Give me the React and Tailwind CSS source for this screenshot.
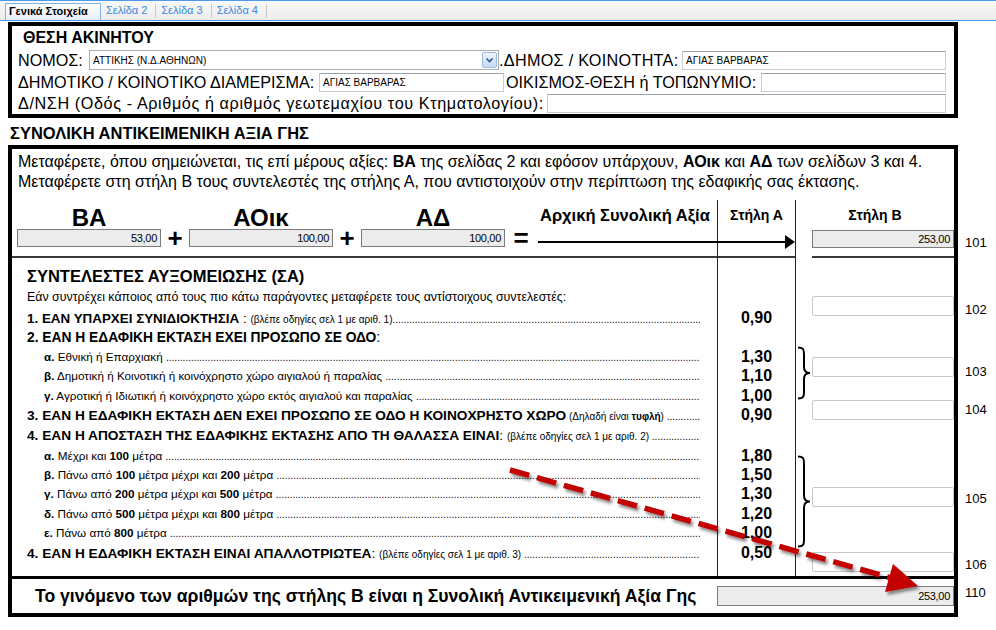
import React from "react";

const dots = ".".repeat(400);

function Dots({ className = "" }) {
  return (
    <span className={"flex-1 min-w-0 overflow-hidden whitespace-nowrap text-[10px] " + className}>
      {dots}
    </span>
  );
}

function GrayBox({ value, className = "" }) {
  return (
    <div
      className={
        "h-[18px] border border-[#7c7c7c] bg-[#ececec] text-right pr-[3px] text-[11px] leading-[16px] tracking-[-0.3px] " +
        className
      }
    >
      {value}
    </div>
  );
}

function WhiteBox({ className = "" }) {
  return <div className={"w-[142px] h-[20px] border border-[#c8c8c8] rounded-[2px] bg-white " + className} />;
}

function TextBox({ value, className = "" }) {
  return (
    <div
      className={
        "h-[19px] border border-[#c9ccd3] border-t-[#9da1a8] bg-white pl-[3px] text-[10px] leading-[17px] tracking-normal whitespace-nowrap " +
        className
      }
    >
      {value}
    </div>
  );
}

function Brace({ h }) {
  const m = h / 2;
  return (
    <svg width="14" height={h} className="ml-px shrink-0">
      <path
        d={`M1,1.5 C6,1.5 7,3 7,8 L7,${m - 6} C7,${m - 1.5} 9,${m} 13,${m} C9,${m} 7,${m + 1.5} 7,${m + 6} L7,${h - 8} C7,${h - 3} 6,${h - 1.5} 1,${h - 1.5}`}
        fill="none"
        stroke="#000"
        strokeWidth="2"
      />
    </svg>
  );
}

function TabBar() {
  const tabs = ["Σελίδα 2", "Σελίδα 3", "Σελίδα 4"];
  return (
    <div className="h-[21px] border-t border-b border-[#4d9be6] bg-gradient-to-b from-[#fafafa] to-[#ebebeb] flex items-end pl-[5px] text-[11px]">
      <div className="h-[17px] w-[96px] border border-b-0 border-[#7fb1e5] bg-gradient-to-b from-white to-[#e4eefa] font-bold leading-[15px] pl-[3px] whitespace-nowrap">
        Γενικά Στοιχεία
      </div>
      {tabs.map((t) => (
        <div key={t} className="h-[19px] flex items-center">
          <span className="pl-[5px] pr-[8px] text-[#3a8be2] whitespace-nowrap leading-[15px]">{t}</span>
          <span className="w-px h-[14px] bg-[#c9c9c9]" />
        </div>
      ))}
    </div>
  );
}

function PropertyBox() {
  return (
    <div className="ml-2 mt-px w-[950px] h-[96px] border-4 border-black flex flex-col text-[16.2px]">
      <div className="h-[23px] pl-[11px] text-[16px] font-bold leading-[23px]">ΘΕΣΗ ΑΚΙΝΗΤΟΥ</div>
      <div className="h-[22px] flex items-center pl-[6px] pr-[8px]">
        <span className="w-[71px] whitespace-nowrap">ΝΟΜΟΣ:</span>
        <div className="w-[410px] h-[20px] border border-[#a9acb2] bg-white flex items-center pl-[3px] pr-px">
          <span className="flex-1 text-[10px] whitespace-nowrap">ΑΤΤΙΚΗΣ (Ν.Δ.ΑΘΗΝΩΝ)</span>
          <div className="w-[15px] h-[16px] rounded-[2px] border border-[#9bbbe2] bg-gradient-to-b from-[#eef5fd] to-[#c3d9f3] flex items-center justify-center">
            <svg width="9" height="7" viewBox="0 0 9 7">
              <path d="M1.5,1.5 L4.5,4.5 L7.5,1.5" fill="none" stroke="#2a5594" strokeWidth="1.6" />
            </svg>
          </div>
        </div>
        <span className="w-[183px] whitespace-nowrap tracking-[0.3px]">.ΔΗΜΟΣ / ΚΟΙΝΟΤΗΤΑ:</span>
        <TextBox value="ΑΓΙΑΣ ΒΑΡΒΑΡΑΣ" className="flex-1" />
      </div>
      <div className="h-[22px] flex items-center pl-[6px] pr-[8px]">
        <span className="w-[301px] whitespace-nowrap">ΔΗΜΟΤΙΚΟ / ΚΟΙΝΟΤΙΚΟ ΔΙΑΜΕΡΙΣΜΑ:</span>
        <TextBox value="ΑΓΙΑΣ ΒΑΡΒΑΡΑΣ" className="w-[185px]" />
        <span className="w-[257px] pl-[2px] whitespace-nowrap">ΟΙΚΙΣΜΟΣ-ΘΕΣΗ ή ΤΟΠΩΝΥΜΙΟ:</span>
        <TextBox value="" className="flex-1" />
      </div>
      <div className="h-[21px] flex items-center pl-[6px] pr-[8px]">
        <span className="w-[529px] whitespace-nowrap tracking-[0.6px]">
          Δ/ΝΣΗ (Οδός - Αριθμός ή αριθμός γεωτεμαχίου του Κτηματολογίου):
        </span>
        <TextBox value="" className="flex-1" />
      </div>
    </div>
  );
}

// left text + value of column A, same height for both columns
const rows = [
  {
    h: 19,
    value: "0,90",
    dots: true,
    content: (
      <>
        <b className="text-[13.4px]">1. ΕΑΝ ΥΠΑΡΧΕΙ ΣΥΝΙΔΙΟΚΤΗΣΙΑ</b>
        <span className="text-[13.4px]"> : </span>
        <span className="text-[10px]">(βλέπε οδηγίες σελ 1 με αριθ. 1)</span>
      </>
    ),
  },
  {
    h: 20,
    content: (
      <>
        <b className="text-[13.8px]">2. ΕΑΝ Η ΕΔΑΦΙΚΗ ΕΚΤΑΣΗ ΕΧΕΙ ΠΡΟΣΩΠΟ ΣΕ ΟΔΟ</b>
        <span className="text-[13.8px]">:</span>
      </>
    ),
  },
  { h: 19, value: "1,30", sub: true, content: <><b>α.</b> Εθνική ή Επαρχιακή </> },
  {
    h: 20,
    value: "1,10",
    sub: true,
    content: <><b>β.</b> Δημοτική ή Κοινοτική ή κοινόχρηστο χώρο αιγιαλού ή παραλίας </>,
  },
  {
    h: 19,
    value: "1,00",
    sub: true,
    content: <><b>γ.</b> Αγροτική ή Ιδιωτική ή κοινόχρηστο χώρο εκτός αιγιαλού και παραλίας </>,
  },
  {
    h: 20,
    value: "0,90",
    dots: true,
    content: (
      <>
        <b className="text-[13.7px]">3. ΕΑΝ Η ΕΔΑΦΙΚΗ ΕΚΤΑΣΗ ΔΕΝ ΕΧΕΙ ΠΡΟΣΩΠΟ ΣΕ ΟΔΟ Η ΚΟΙΝΟΧΡΗΣΤΟ ΧΩΡΟ</b>
        <span className="text-[10px]">
          {" (Δηλαδή είναι "}
          <b>τυφλή</b>
          {") "}
        </span>
      </>
    ),
  },
  {
    h: 21,
    dots: true,
    content: (
      <>
        <b className="text-[13.7px]">4. ΕΑΝ Η ΑΠΟΣΤΑΣΗ ΤΗΣ ΕΔΑΦΙΚΗΣ ΕΚΤΑΣΗΣ ΑΠΟ ΤΗ ΘΑΛΑΣΣΑ ΕΙΝΑΙ</b>
        <span className="text-[13.7px]">: </span>
        <span className="text-[10px]">(βλέπε οδηγίες σελ 1 με αριθ. 2) </span>
      </>
    ),
  },
  { h: 19, value: "1,80", sub: true, content: <><b>α.</b> Μέχρι και <b>100</b> μέτρα </> },
  {
    h: 19,
    value: "1,50",
    sub: true,
    content: <><b>β.</b> Πάνω από <b>100</b> μέτρα μέχρι και <b>200</b> μέτρα </>,
  },
  {
    h: 20,
    value: "1,30",
    sub: true,
    content: <><b>γ.</b> Πάνω από <b>200</b> μέτρα μέχρι και <b>500</b> μέτρα </>,
  },
  {
    h: 19,
    value: "1,20",
    sub: true,
    content: <><b>δ.</b> Πάνω από <b>500</b> μέτρα μέχρι και <b>800</b> μέτρα </>,
  },
  { h: 20, value: "1,00", sub: true, content: <><b>ε.</b> Πάνω από <b>800</b> μέτρα </> },
  {
    h: 19,
    value: "0,50",
    dots: true,
    content: (
      <>
        <b className="text-[13.7px]">4. ΕΑΝ Η ΕΔΑΦΙΚΗ ΕΚΤΑΣΗ ΕΙΝΑΙ ΑΠΑΛΛΟΤΡΙΩΤΕΑ</b>
        <span className="text-[13.7px]">: </span>
        <span className="text-[10px]">(βλέπε οδηγίες σελ 1 με αριθ. 3) </span>
      </>
    ),
  },
];

function FormulaGroup({ title, value }) {
  return (
    <div className="w-[144px] flex flex-col items-center">
      <div className="h-[22px] text-[24px] font-bold leading-[22px]">{title}</div>
      <GrayBox value={value} className="w-full" />
    </div>
  );
}

function Operator({ sign, width }) {
  return (
    <div className={"h-[18px] mt-[22px] flex items-center justify-center text-[26px] font-bold leading-none " + width}>
      {sign}
    </div>
  );
}

function MainBox() {
  return (
    <div className="ml-2 w-[950px] border-4 border-black flex flex-col">
      {/* intro */}
      <div className="pt-[3px] pb-[8px] pl-[6px] text-[16px] leading-[20px] whitespace-nowrap">
        <div>
          Μεταφέρετε, όπου σημειώνεται, τις επί μέρους αξίες: <b>ΒΑ</b> της σελίδας 2 και εφόσον υπάρχουν,{" "}
          <b>ΑΟικ</b> και <b>ΑΔ</b> των σελίδων 3 και 4.
        </div>
        <div>
          Μεταφέρετε στη στήλη Β τους συντελεστές της στήλης Α, που αντιστοιχούν στην περίπτωση της εδαφικής σας
          έκτασης.
        </div>
      </div>

      {/* formula header */}
      <div className="relative flex h-[58px]">
        <div className="w-[705px] border-b-2 border-[#3a3a3a] flex items-start pt-[7px] pl-[5px]">
          <FormulaGroup title="ΒΑ" value="53,00" />
          <Operator sign="+" width="w-[28px]" />
          <FormulaGroup title="ΑΟικ" value="100,00" />
          <Operator sign="+" width="w-[28px]" />
          <FormulaGroup title="ΑΔ" value="100,00" />
          <Operator sign="=" width="w-[32px]" />
          <div className="ml-[3px] -mt-[2px] text-[16.5px] font-bold leading-[20px] whitespace-nowrap">
            Αρχική Συνολική Αξία
          </div>
        </div>
        <div className="w-[79px] border-x border-x-[#222] border-b-2 border-b-[#3a3a3a] pt-[6px] text-center text-[14px] font-bold leading-[18px]">
          Στήλη Α
        </div>
        <div className="flex-1 flex flex-col">
          <div className="pt-[6px] text-center text-[14px] font-bold leading-[18px]">Στήλη Β</div>
          <GrayBox value="253,00" className="mt-[6px] ml-auto w-[142px]" />
          <div className="mt-auto ml-[16px] border-b-2 border-[#3a3a3a]" />
        </div>
        <svg className="absolute left-[526px] top-[35px]" width="258" height="14">
          <line x1="0" y1="7" x2="248" y2="7" stroke="#000" strokeWidth="2" />
          <polygon points="247,0 257,7 247,14" fill="#000" />
        </svg>
      </div>

      {/* coefficients */}
      <div className="flex h-[318px]">
        <div className="w-[705px] flex flex-col pl-[15px] pr-[17px]">
          <div className="mt-[7px] h-[22px] text-[16.5px] font-bold leading-[22px] whitespace-nowrap">
            ΣΥΝΤΕΛΕΣΤΕΣ ΑΥΞΟΜΕΙΩΣΗΣ (ΣΑ)
          </div>
          <div className="h-[21px] text-[12.4px] leading-[21px] whitespace-nowrap">
            Εάν συντρέχει κάποιος από τους πιο κάτω παράγοντες μεταφέρετε τους αντίστοιχους συντελεστές:
          </div>
          {rows.map((r, i) => (
            <div
              key={i}
              style={{ height: r.h }}
              className={
                "flex items-baseline whitespace-nowrap overflow-hidden leading-[19px] " +
                (r.sub ? "pl-[17px] text-[11.7px]" : "")
              }
            >
              <span className="whitespace-pre">{r.content}</span>
              {(r.sub || r.dots) && <Dots />}
            </div>
          ))}
        </div>
        <div className="w-[79px] border-x border-[#222] flex flex-col pt-[50px]">
          {rows.map((r, i) => (
            <div key={i} style={{ height: r.h }} className="flex items-center justify-center text-[16px] font-bold leading-none">
              {r.value}
            </div>
          ))}
        </div>
        <div className="flex-1 flex flex-col">
          <WhiteBox className="mt-[38px] ml-auto" />
          <div className="flex h-[54px] mt-[30px]">
            <Brace h={54} />
            <WhiteBox className="mt-[11px] ml-auto" />
          </div>
          <WhiteBox className="ml-auto" />
          <div className="flex h-[93px] mt-[35px]">
            <Brace h={93} />
            <WhiteBox className="mt-[32px] ml-auto" />
          </div>
          <WhiteBox className="mt-[4px] ml-auto" />
        </div>
      </div>

      {/* result */}
      <div className="border-t-[3px] border-black h-[37px] flex items-center">
        <div className="w-[705px] pl-[23px] text-[17.6px] font-bold whitespace-nowrap">
          Το γινόμενο των αριθμών της στήλης Β είναι η Συνολική Αντικειμενική Αξία Γης
        </div>
        <GrayBox value="253,00" className="flex-1 h-[20px] leading-[18px]" />
      </div>
    </div>
  );
}

function CodeColumn() {
  const codes = [
    ["101", "mt-[90px]"],
    ["102", "mt-[51px]"],
    ["103", "mt-[46px]"],
    ["104", "mt-[22px]"],
    ["105", "mt-[73px]"],
    ["106", "mt-[50px]"],
    ["110", "mt-[12px]"],
  ];
  return (
    <div className="flex flex-col pl-[7px] text-[13px] leading-[16px]">
      {codes.map(([c, m]) => (
        <div key={c} className={m}>
          {c}
        </div>
      ))}
    </div>
  );
}

export default function App() {
  return (
    <div className="relative w-full h-[630px] bg-white text-black overflow-hidden font-['Liberation_Sans',Arial,sans-serif]">
      <TabBar />
      <PropertyBox />
      <div className="h-[27px] pt-[6px] pl-[10px] text-[16.5px] font-bold leading-[19px]">
        ΣΥΝΟΛΙΚΗ ΑΝΤΙΚΕΙΜΕΝΙΚΗ ΑΞΙΑ ΓΗΣ
      </div>
      <div className="flex">
        <MainBox />
        <CodeColumn />
      </div>

      {/* red dashed pointer drawn over the form */}
      <svg className="absolute left-0 top-0 pointer-events-none" width="996" height="630">
        <defs>
          <filter id="shadow" x="-10%" y="-20%" width="130%" height="150%">
            <feDropShadow dx="2" dy="3" stdDeviation="1.6" floodColor="#000" floodOpacity="0.45" />
          </filter>
        </defs>
        <g filter="url(#shadow)">
          <line x1="510" y1="470" x2="891" y2="578" stroke="#c20000" strokeWidth="5.5" strokeDasharray="20 8" />
          <polygon points="918,586 893,564 885,592" fill="#c20000" />
        </g>
      </svg>
    </div>
  );
}
